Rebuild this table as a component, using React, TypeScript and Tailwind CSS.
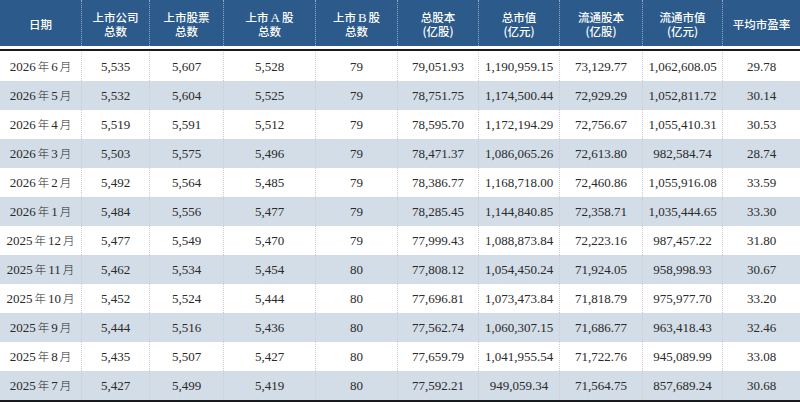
const cols = "grid grid-cols-[81px_68px_74px_92px_82px_81px_81px_83px_80px_78px]";

const Latin = ({ c }: { c: string }) => (
  <span className="font-['Liberation_Serif',serif] font-normal text-[13px] mx-[2px]">{c}</span>
);

const heads: React.ReactNode[][] = [
  ["日期"],
  ["上市公司", "总数"],
  ["上市股票", "总数"],
  [<>上市<Latin c="A" />股</>, "总数"],
  [<>上市<Latin c="B" />股</>, "总数"],
  ["总股本", "(亿股)"],
  ["总市值", "(亿元)"],
  ["流通股本", "(亿股)"],
  ["流通市值", "(亿元)"],
  ["平均市盈率"],
];

const rows: string[][] = [
  ["2026|6", "5,535", "5,607", "5,528", "79", "79,051.93", "1,190,959.15", "73,129.77", "1,062,608.05", "29.78"],
  ["2026|5", "5,532", "5,604", "5,525", "79", "78,751.75", "1,174,500.44", "72,929.29", "1,052,811.72", "30.14"],
  ["2026|4", "5,519", "5,591", "5,512", "79", "78,595.70", "1,172,194.29", "72,756.67", "1,055,410.31", "30.53"],
  ["2026|3", "5,503", "5,575", "5,496", "79", "78,471.37", "1,086,065.26", "72,613.80", "982,584.74", "28.74"],
  ["2026|2", "5,492", "5,564", "5,485", "79", "78,386.77", "1,168,718.00", "72,460.86", "1,055,916.08", "33.59"],
  ["2026|1", "5,484", "5,556", "5,477", "79", "78,285.45", "1,144,840.85", "72,358.71", "1,035,444.65", "33.30"],
  ["2025|12", "5,477", "5,549", "5,470", "79", "77,999.43", "1,088,873.84", "72,223.16", "987,457.22", "31.80"],
  ["2025|11", "5,462", "5,534", "5,454", "80", "77,808.12", "1,054,450.24", "71,924.05", "958,998.93", "30.67"],
  ["2025|10", "5,452", "5,524", "5,444", "80", "77,696.81", "1,073,473.84", "71,818.79", "975,977.70", "33.20"],
  ["2025|9", "5,444", "5,516", "5,436", "80", "77,562.74", "1,060,307.15", "71,686.77", "963,418.43", "32.46"],
  ["2025|8", "5,435", "5,507", "5,427", "80", "77,659.79", "1,041,955.54", "71,722.76", "945,089.99", "33.08"],
  ["2025|7", "5,427", "5,499", "5,419", "80", "77,592.21", "949,059.34", "71,564.75", "857,689.24", "30.68"],
];

function DateCell({ v }: { v: string }) {
  const [y, m] = v.split("|");
  return (
    <span className="flex items-baseline">
      {y}
      <span className="mx-[2px] text-[11.5px] font-['Noto_Sans_CJK_SC',sans-serif] font-light">年</span>
      {m}
      <span className="ml-[2px] text-[11.5px] font-['Noto_Sans_CJK_SC',sans-serif] font-light">月</span>
    </span>
  );
}

export default function App() {
  return (
    <div className="w-[800px] h-[403px] bg-white overflow-hidden">
      <div className={`${cols} h-[46px] bg-[#2c5b8b] text-white font-['Noto_Sans_CJK_SC',sans-serif] text-[11.5px] font-medium leading-[14px]`}>
        {heads.map((h, i) => (
          <div
            key={i}
            className={`flex flex-col items-center justify-center pt-[2px] ${i > 0 ? "border-l border-dotted border-[#8eaac6]" : ""}`}
          >
            {h.map((t, k) => (
              <span key={k} className="flex items-baseline h-[14px]">{t}</span>
            ))}
          </div>
        ))}
      </div>
      <div className="h-[3px]" />
      <div className="h-[2px] bg-[#1a1a1a]" />
      <div className="h-px" />
      <div className="font-['Liberation_Serif','Noto_Sans_CJK_SC',serif] text-[13px] text-[#2a2a2a]">
        {rows.map((r, ri) => (
          <div key={ri} className={`${cols} h-[29px] ${ri % 2 === 1 ? "bg-[#d3dde7]" : "bg-white"}`}>
            {r.map((c, ci) => (
              <div
                key={ci}
                className={`flex items-center justify-center ${ci > 0 ? "border-l border-dotted border-[#cfc9d3]" : ""}`}
              >
                {ci === 0 ? <DateCell v={c} /> : c}
              </div>
            ))}
          </div>
        ))}
      </div>
      <div className="h-[2px] bg-[#1a1a1a]" />
    </div>
  );
}
